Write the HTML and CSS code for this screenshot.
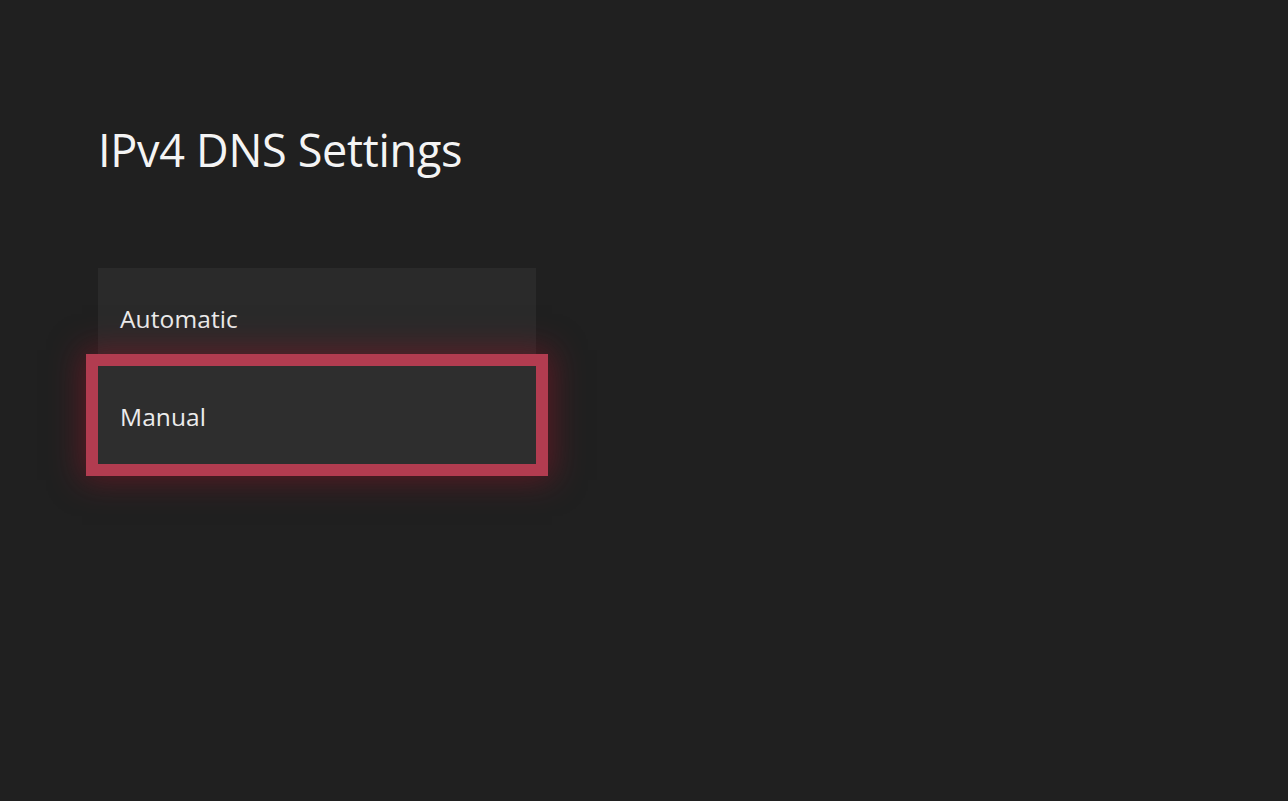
FILE: index.html
```html
<!DOCTYPE html>
<html lang="en">
<head>
<meta charset="utf-8">
<title>IPv4 DNS Settings</title>
<link rel="stylesheet" href="styles.css">
</head>
<body>
<main class="page">
  <h1 class="title">IPv4 DNS Settings</h1>
  <ul class="options">
    <li class="option">Automatic</li>
    <li class="option option--focused">Manual</li>
  </ul>
</main>
</body>
</html>
```

FILE: styles.css
```css
html, body {
  margin: 0;
  padding: 0;
  background: #202020;
  height: 100%;
}

body {
  font-family: "Open Sans", "Noto Sans", "DejaVu Sans", sans-serif;
  color: #f2f2f2;
  overflow: hidden;
}

.page {
  padding: 119px 0 0 98px;
}

.title {
  margin: 0;
  font-size: 45px;
  font-weight: 400;
  line-height: 62px;
  letter-spacing: -0.3px;
  color: #f4f4f4;
}

.options {
  list-style: none;
  margin: 87px 0 0 0;
  padding: 0;
  width: 438px;
}

.option {
  box-sizing: border-box;
  height: 98px;
  display: flex;
  align-items: center;
  padding: 2px 0 0 22px;
  font-size: 24.5px;
  letter-spacing: 0.1px;
  color: #ececec;
  background: #2a2a2a;
}

.option--focused {
  position: relative;
  background: #2e2e2e;
  box-shadow: 0 0 0 12px #b23c50, 0 0 30px 16px rgba(150, 20, 40, 0.5);
}
```
